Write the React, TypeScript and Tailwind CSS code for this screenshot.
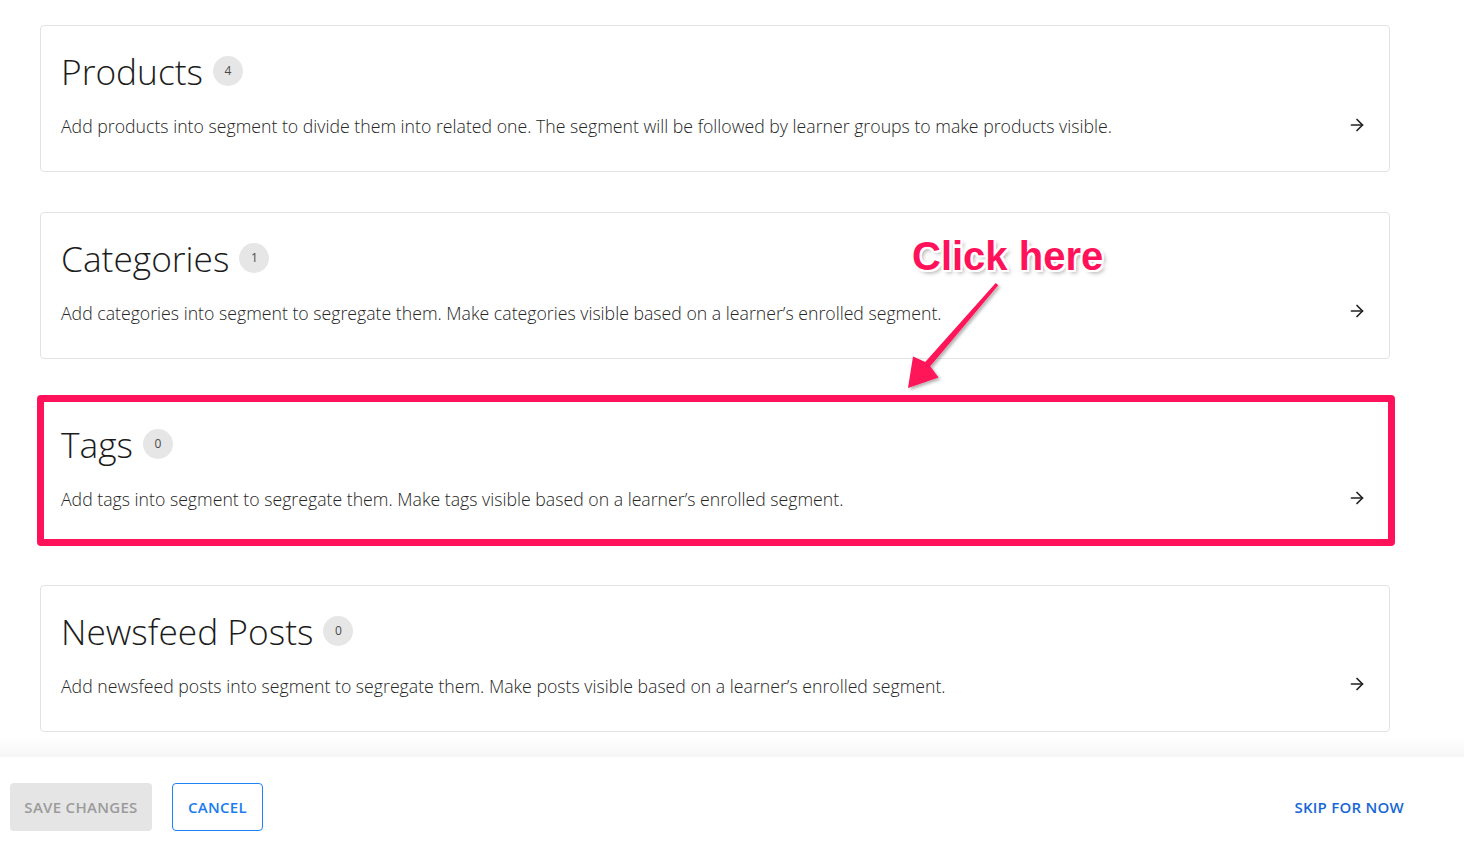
import React from "react";

type Item = { title: string; count: number; desc: string; highlight?: boolean };

const items: Item[] = [
  {
    title: "Products",
    count: 4,
    desc: "Add products into segment to divide them into related one. The segment will be followed by learner groups to make products visible.",
  },
  {
    title: "Categories",
    count: 1,
    desc: "Add categories into segment to segregate them. Make categories visible based on a learner\u2019s enrolled segment.",
  },
  {
    title: "Tags",
    count: 0,
    desc: "Add tags into segment to segregate them. Make tags visible based on a learner\u2019s enrolled segment.",
    highlight: true,
  },
  {
    title: "Newsfeed Posts",
    count: 0,
    desc: "Add newsfeed posts into segment to segregate them. Make posts visible based on a learner\u2019s enrolled segment.",
  },
];

function Arrow() {
  return (
    <svg width="14" height="14" viewBox="0 0 14 14" fill="none" stroke="#222" strokeWidth="1.7" strokeLinecap="round" strokeLinejoin="round">
      <path d="M1.5 7h11" />
      <path d="M7 1.5L12.5 7 7 12.5" />
    </svg>
  );
}

function Card({ item }: { item: Item }) {
  return (
    <div className="relative h-[147px] w-[1350px] rounded-[4px] border border-[#e3e3e3] bg-white pl-[20px] pr-[25px] pt-[23px]">
      <div className="flex items-center gap-[10px]">
        <span className="text-[35.3px] font-light leading-[44px] text-[#1c1c1c]">{item.title}</span>
        <span className="flex h-[30px] w-[30px] items-center justify-center rounded-full bg-[#e6e6e6] text-[12px] font-medium text-[#4a4a4a]">
          {item.count}
        </span>
      </div>
      <div className="mt-[20px] flex items-center justify-between">
        <span className="text-[17.7px] font-light leading-[26px] text-[#262626]">{item.desc}</span>
        <span className="mt-[-3px]">
          <Arrow />
        </span>
      </div>
      {item.highlight && (
        <div className="pointer-events-none absolute left-[-4px] top-[-4px] h-[151px] w-[1358px] rounded-[4px] border-[7px] border-[#ff1259]" />
      )}
    </div>
  );
}

export default function App() {
  return (
    <div
      className="relative flex h-[853px] w-[1464px] flex-col overflow-hidden bg-white"
      style={{ fontFamily: '"Open Sans", "Noto Sans", sans-serif' }}
    >
      <div className="flex flex-1 flex-col gap-[39.5px] overflow-hidden pl-[40px] pt-[25px]">
        {items.map((it) => (
          <Card key={it.title} item={it} />
        ))}
      </div>
      <div className="h-[21px] bg-gradient-to-b from-white to-[#f6f6f6]" />
      <div className="flex h-[96px] items-start justify-between bg-white pl-[10px] pr-[60px] pt-[26px]">
        <div className="flex gap-[20px]">
          <button className="h-[48px] w-[142px] rounded-[4px] bg-[#e5e5e5] text-[15px] font-semibold tracking-[0.3px] text-[#9b9b9b]">
            SAVE CHANGES
          </button>
          <button className="h-[48px] w-[91px] rounded-[4px] border border-[#1f83f5] bg-white text-[15px] font-semibold tracking-[0.3px] text-[#1a7cf0]">
            CANCEL
          </button>
        </div>
        <div className="flex h-[48px] items-center text-[15px] font-semibold tracking-[0.25px] text-[#1766d6]">SKIP FOR NOW</div>
      </div>

      {/* annotation */}
      <div
        className="pointer-events-none absolute left-[912px] top-[231px] text-[40px] font-bold leading-[50px] text-[#ff1259]"
        style={{
          fontFamily: '"Liberation Sans", Arial, sans-serif',
          textShadow:
            "2px 0 0 #fff, -2px 0 0 #fff, 0 2px 0 #fff, 0 -2px 0 #fff, 2px 2px 0 #fff, -2px -2px 0 #fff, 2px -2px 0 #fff, -2px 2px 0 #fff, 3px 3px 4px rgba(0,0,0,0.35)",
        }}
      >
        Click here
      </div>
      <svg className="pointer-events-none absolute left-0 top-0" width="1464" height="853">
        <defs>
          <filter id="ds" x="-20%" y="-20%" width="140%" height="140%">
            <feDropShadow dx="2" dy="2" stdDeviation="1.5" floodColor="#000" floodOpacity="0.3" />
          </filter>
        </defs>
        <polygon
          points="998.3,285.2 930.2,366.2 938.5,377.5 908,388 913,356.5 925.2,362 995.7,283"
          fill="#ff1259"
          filter="url(#ds)"
        />
      </svg>
    </div>
  );
}
